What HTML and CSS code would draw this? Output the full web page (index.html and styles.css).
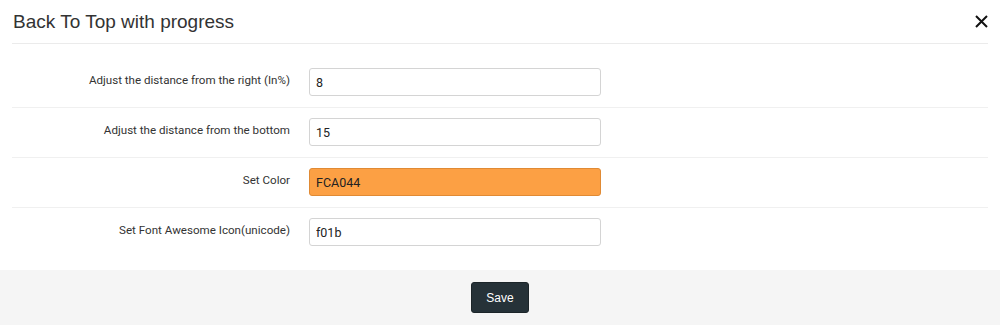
FILE: index.html
```html
<!DOCTYPE html>
<html lang="en">
<head>
    <meta charset="UTF-8">
    <meta name="viewport" content="width=device-width, initial-scale=1.0">
    <title>Back To Top with progress</title>
    <link rel="stylesheet" href="styles.css">
</head>
<body>
    <div class="modal">
        <div class="modal-header">
            <h3>Back To Top with progress</h3>
            <button class="close" aria-label="Close">
                <svg width="13" height="13" viewBox="0 0 13 13">
                    <path d="M1 1 L12 12 M12 1 L1 12" stroke="#111" stroke-width="2" fill="none"/>
                </svg>
            </button>
        </div>

        <div class="modal-body">
            <div class="form-row">
                <label for="right">Adjust the distance from the right (In%)</label>
                <input type="text" id="right" value="8">
            </div>
            <div class="form-row">
                <label for="bottom">Adjust the distance from the bottom</label>
                <input type="text" id="bottom" value="15">
            </div>
            <div class="form-row">
                <label for="color">Set Color</label>
                <input type="text" id="color" class="color-input" value="FCA044">
            </div>
            <div class="form-row">
                <label for="icon">Set Font Awesome Icon(unicode)</label>
                <input type="text" id="icon" value="f01b">
            </div>
        </div>

        <div class="modal-footer">
            <button class="btn-save">Save</button>
        </div>
    </div>
</body>
</html>
```

FILE: styles.css
```css
/* Page */
body {
    margin: 0;
    padding: 0;
    background: #fff;
    font-family: Roboto, "Liberation Sans", Arial, sans-serif;
    color: #333;
}

.modal {
    width: 1000px;
    height: 325px;
    background: #fff;
    display: flex;
    flex-direction: column;
}

/* Header */
.modal-header {
    margin: 0 12px;
    height: 43px;
    border-bottom: 1px solid #ebebeb;
    display: flex;
    align-items: center;
    justify-content: space-between;
}

.modal-header h3 {
    margin: 0;
    padding-left: 1px;
    padding-top: 1px;
    font-family: "Liberation Sans", Arial, sans-serif;
    font-size: 19px;
    font-weight: normal;
    color: #333;
}

.close {
    border: none;
    background: none;
    padding: 0;
    margin-right: 0;
    width: 13px;
    height: 13px;
    cursor: pointer;
    display: flex;
}

/* Body rows */
.modal-body {
    padding: 14px 12px 13px 12px;
}

.form-row {
    display: grid;
    grid-template-columns: 278px 292px;
    column-gap: 19px;
    padding: 10px 0 11px;
    border-bottom: 1px solid #f0f0f0;
}

.form-row:last-child {
    border-bottom: none;
}

.form-row label {
    text-align: right;
    font-size: 11.6px;
    padding-top: 5px;
    color: #333;
}

.form-row input {
    box-sizing: border-box;
    height: 28px;
    padding: 0 6px;
    border: 1px solid #d4d4d4;
    border-radius: 3px;
    font-family: Roboto, "Liberation Sans", Arial, sans-serif;
    font-size: 12.5px;
    color: #222;
    background: #fff;
}

.form-row .color-input {
    background: #fca044;
    border-color: #e08a34;
    color: #222;
}

/* Footer */
.modal-footer {
    flex: 1;
    background: #f5f5f5;
    display: flex;
    justify-content: center;
    align-items: flex-start;
    padding-top: 12px;
}

.btn-save {
    width: 58px;
    height: 31px;
    background: #263238;
    color: #fff;
    border: 1px solid #1c2529;
    border-radius: 3px;
    font-family: "Liberation Sans", Arial, sans-serif;
    font-size: 12px;
    cursor: pointer;
}
```
